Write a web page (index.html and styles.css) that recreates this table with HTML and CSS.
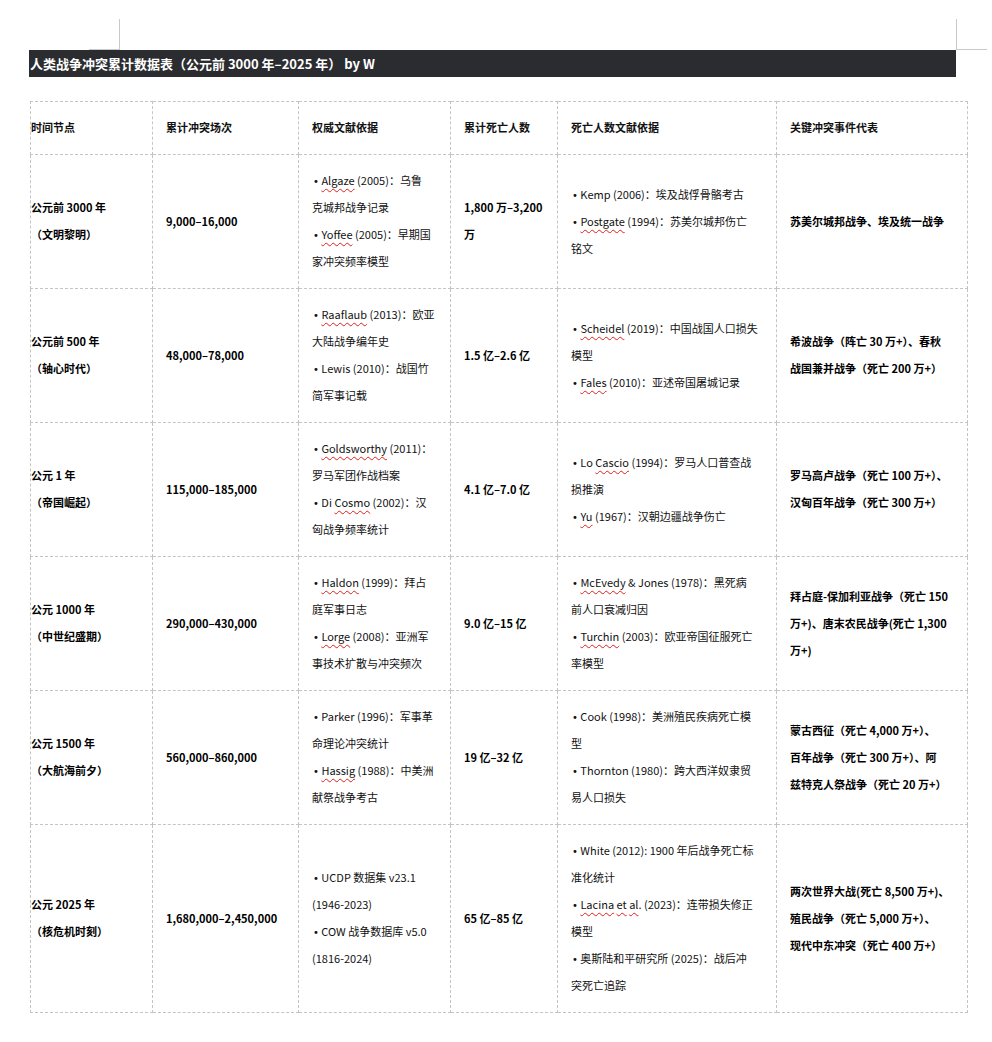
FILE: index.html
```html
<!DOCTYPE html>
<html lang="zh-CN">
<head>
<meta charset="utf-8">
<title>人类战争冲突累计数据表</title>
<link rel="stylesheet" href="styles.css">
</head>
<body>
<div class="page">
  <div class="marks">
    <span class="mark mark-tl"></span>
    <span class="mark mark-tr"></span>
  </div>
  <h1 class="title">人类战争冲突累计数据表（公元前 3000 年–2025 年） by W</h1>
  <table class="data">
    <colgroup>
      <col class="c1"><col class="c2"><col class="c3"><col class="c4"><col class="c5"><col class="c6">
    </colgroup>
    <thead>
      <tr>
        <th class="first">时间节点</th>
        <th>累计冲突场次</th>
        <th>权威文献依据</th>
        <th>累计死亡人数</th>
        <th>死亡人数文献依据</th>
        <th>关键冲突事件代表</th>
      </tr>
    </thead>
    <tbody>
      <tr>
        <td class="first b">公元前 3000 年<br>（文明黎明）</td>
        <td class="b">9,000–16,000</td>
        <td><span class="bl">•</span> <span class="sp">Algaze</span> (2005)：乌鲁<br>克城邦战争记录<br><span class="bl">•</span> <span class="sp">Yoffee</span> (2005)：早期国<br>家冲突频率模型</td>
        <td class="b">1,800 万–3,200<br>万</td>
        <td><span class="bl">•</span> Kemp (2006)：埃及战俘骨骼考古<br><span class="bl">•</span> <span class="sp">Postgate</span> (1994)：苏美尔城邦伤亡<br>铭文</td>
        <td class="b">苏美尔城邦战争、埃及统一战争</td>
      </tr>
      <tr>
        <td class="first b">公元前 500 年<br>（轴心时代）</td>
        <td class="b">48,000–78,000</td>
        <td><span class="bl">•</span> <span class="sp">Raaflaub</span> (2013)：欧亚<br>大陆战争编年史<br><span class="bl">•</span> Lewis (2010)：战国竹<br>简军事记载</td>
        <td class="b">1.5 亿–2.6 亿</td>
        <td><span class="bl">•</span> <span class="sp">Scheidel</span> (2019)：中国战国人口损失<br>模型<br><span class="bl">•</span> <span class="sp">Fales</span> (2010)：亚述帝国屠城记录</td>
        <td class="b">希波战争（阵亡 30 万+）、春秋<br>战国兼并战争（死亡 200 万+）</td>
      </tr>
      <tr>
        <td class="first b">公元 1 年<br>（帝国崛起）</td>
        <td class="b">115,000–185,000</td>
        <td><span class="bl">•</span> <span class="sp">Goldsworthy</span> (2011)：<br>罗马军团作战档案<br><span class="bl">•</span> Di <span class="sp">Cosmo</span> (2002)：汉<br>匈战争频率统计</td>
        <td class="b">4.1 亿–7.0 亿</td>
        <td><span class="bl">•</span> Lo <span class="sp">Cascio</span> (1994)：罗马人口普查战<br>损推演<br><span class="bl">•</span> <span class="sp">Yu</span> (1967)：汉朝边疆战争伤亡</td>
        <td class="b">罗马高卢战争（死亡 100 万+）、<br>汉匈百年战争（死亡 300 万+）</td>
      </tr>
      <tr>
        <td class="first b">公元 1000 年<br>（中世纪盛期）</td>
        <td class="b">290,000–430,000</td>
        <td><span class="bl">•</span> <span class="sp">Haldon</span> (1999)：拜占<br>庭军事日志<br><span class="bl">•</span> <span class="sp">Lorge</span> (2008)：亚洲军<br>事技术扩散与冲突频次</td>
        <td class="b">9.0 亿–15 亿</td>
        <td><span class="bl">•</span> <span class="sp">McEvedy</span> &amp; Jones (1978)：黑死病<br>前人口衰减归因<br><span class="bl">•</span> <span class="sp">Turchin</span> (2003)：欧亚帝国征服死亡<br>率模型</td>
        <td class="b">拜占庭-保加利亚战争（死亡 150<br>万+)、唐末农民战争(死亡 1,300<br>万+)</td>
      </tr>
      <tr>
        <td class="first b">公元 1500 年<br>（大航海前夕）</td>
        <td class="b">560,000–860,000</td>
        <td><span class="bl">•</span> Parker (1996)：军事革<br>命理论冲突统计<br><span class="bl">•</span> <span class="sp">Hassig</span> (1988)：中美洲<br>献祭战争考古</td>
        <td class="b">19 亿–32 亿</td>
        <td><span class="bl">•</span> Cook (1998)：美洲殖民疾病死亡模<br>型<br><span class="bl">•</span> Thornton (1980)：跨大西洋奴隶贸<br>易人口损失</td>
        <td class="b">蒙古西征（死亡 4,000 万+）、<br>百年战争（死亡 300 万+）、阿<br>兹特克人祭战争（死亡 20 万+）</td>
      </tr>
      <tr>
        <td class="first b">公元 2025 年<br>（核危机时刻）</td>
        <td class="b">1,680,000–2,450,000</td>
        <td><span class="bl">•</span> UCDP 数据集 v23.1<br>(1946-2023)<br><span class="bl">•</span> COW 战争数据库 v5.0<br>(1816-2024)</td>
        <td class="b">65 亿–85 亿</td>
        <td><span class="bl">•</span> White (2012): 1900 年后战争死亡标<br>准化统计<br><span class="bl">•</span> <span class="sp">Lacina</span> <span class="sp">et</span> <span class="sp">al</span>. (2023)：连带损失修正<br>模型<br><span class="bl">•</span> 奥斯陆和平研究所 (2025)：战后冲<br>突死亡追踪</td>
        <td class="b">两次世界大战(死亡 8,500 万+)、<br>殖民战争（死亡 5,000 万+）、<br>现代中东冲突（死亡 400 万+）</td>
      </tr>
    </tbody>
  </table>
</div>
</body>
</html>
```

FILE: styles.css
```css
html, body {
  margin: 0;
  padding: 0;
  background: #ffffff;
}

body {
  font-family: "Noto Sans CJK SC", "Noto Sans", sans-serif;
  font-size: 11px;
  color: #111111;
}

.page {
  width: 992px;
  padding-bottom: 28px;
}

.marks {
  position: relative;
  height: 50px;
}

.mark {
  position: absolute;
  top: 19px;
  width: 30px;
  height: 30px;
  border-bottom: 1px solid #c9c9c9;
}

.mark-tl {
  left: 89px;
  border-right: 1px solid #c9c9c9;
}

.mark-tr {
  left: 956px;
  border-left: 1px solid #c9c9c9;
}

.title {
  margin: 0 0 0 29px;
  width: 926px;
  height: 27px;
  padding-left: 1px;
  background: #2b2c30;
  color: #ffffff;
  font-size: 13px;
  font-weight: 700;
  line-height: 27px;
  white-space: nowrap;
}

.data {
  margin: 24px 0 0 30px;
  width: 937px;
  table-layout: fixed;
  border-collapse: collapse;
}

.c1 { width: 122px; }
.c2 { width: 146px; }
.c3 { width: 152px; }
.c4 { width: 107px; }
.c5 { width: 219px; }
.c6 { width: 191px; }

.data th,
.data td {
  border: 1px dashed #c4c4c4;
  padding: 12px 8px 13px 13px;
  line-height: 27px;
  text-align: left;
  vertical-align: middle;
  white-space: nowrap;
}

.data th {
  font-weight: 700;
}

.data .first {
  padding-left: 0;
}

.data td.b {
  font-weight: 700;
  color: #000000;
}

.bl {
  font-family: "DejaVu Sans", sans-serif;
  font-size: 10px;
  line-height: 1;
  margin-left: 1px;
}

.sp {
  text-decoration: underline wavy #e0201c;
  text-decoration-thickness: 1px;
  text-underline-offset: 3px;
  text-decoration-skip-ink: none;
}
```
